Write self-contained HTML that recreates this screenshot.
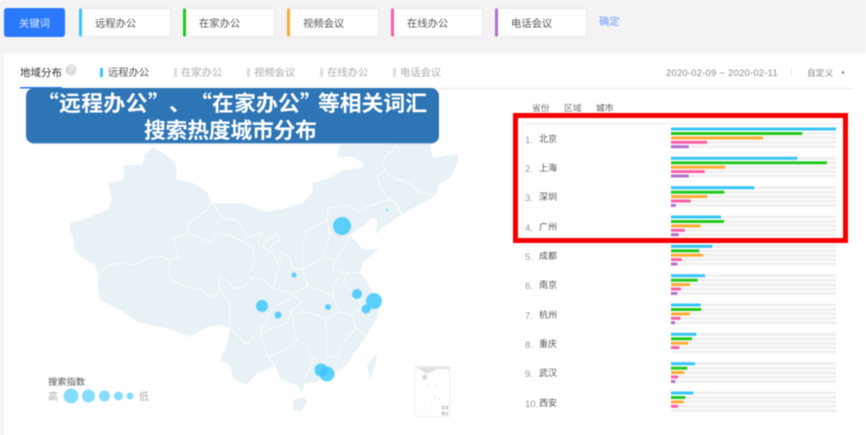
<!DOCTYPE html>
<html lang="zh"><head><meta charset="utf-8"><title>地域分布</title>
<style>
html,body{margin:0;padding:0;background:#fff}
#p{position:relative;width:866px;height:435px;overflow:hidden;background:#fff;font-family:"Liberation Sans","Noto Sans CJK SC",sans-serif;filter:blur(.45px)}
#p div,#p span.a{position:absolute}
.top{left:0;top:0;width:866px;height:53px;background:#f3f3f3}
.gut{left:0;top:53px;width:4px;height:382px;background:#f4f4f4}
.btn{left:4px;top:8px;width:61px;height:29px;background:#2a78fb;border-radius:3px;color:#dfeaff;font-size:10.3px;line-height:33px;text-align:center}
.card{top:8px;width:88px;height:27px;background:#fff;border:1px solid #ebebeb;border-left:3px solid;border-radius:2px;color:#555;font-size:10.3px;line-height:32px;text-indent:13px;white-space:nowrap;box-sizing:content-box}
.t{white-space:nowrap;line-height:14px}
.leg{top:67px;font-size:10.3px;color:#aaa}
.st{top:68px;width:2.5px;height:9px;background:#ddd}
.hd{top:101px;font-size:8.8px;color:#777}
.n{left:525px;font-size:9.5px;color:#999;margin-top:2px}
.c{left:539px;font-size:9px;color:#555}
.banner{left:26px;top:88px;width:413px;height:56px;background:#2e75b6;border-radius:8px;border-bottom:1px solid #a9c8e4;box-sizing:border-box}
.bt{left:0;width:413px;color:#fff;font-weight:700;font-size:21.8px;line-height:26px;white-space:nowrap;font-family:"Noto Sans CJK SC","Liberation Sans",sans-serif}
.red{left:513px;top:113px;width:335px;height:130px;border:5px solid #f50000;box-sizing:border-box}
svg{position:absolute;left:0;top:0}
</style></head><body><div id="p">
<div class="top"></div><div class="gut"></div>
<div class="btn">关键词</div>
<div class="card" style="left:79px;border-left-color:#36c5fb">远程办公</div>
<div class="card" style="left:183px;border-left-color:#22c91e">在家办公</div>
<div class="card" style="left:287px;border-left-color:#ffaa33">视频会议</div>
<div class="card" style="left:391px;border-left-color:#fb5fa5">在线办公</div>
<div class="card" style="left:495px;border-left-color:#b56fcc">电话会议</div>
<div class="t" style="left:599px;top:16px;font-size:10.3px;color:#6f9ff5">确定</div>

<svg width="866" height="435" viewBox="0 0 866 435">
<defs><g id="tr" fill="#f0f0f0"><rect x="671" y="127.5" width="165" height="3"/><rect x="671" y="132" width="165" height="3"/><rect x="671" y="136.4" width="165" height="3"/><rect x="671" y="140.8" width="165" height="3"/><rect x="671" y="145.2" width="165" height="3"/></g></defs>
<!-- map -->
<path fill="#e8f1f5" d="M153 147L163 153L175 162L177 172L176 180L193 183L207 192L212 203L240 203L267 212L287 208L303 203L313 192L312 183L330 178L343 170L363 168L363 163L353 157L337 157L340 145L430 144L433 158L458 154L458 162L450 178L438 185L437 195L422 203L403 214L383 227L375 235L378 220L372 218L360 228L350 235L357 243L363 250L380 248L363 262L360 272L370 287L375 296L380 305L377 318L367 335L353 355L345 367L333 373L317 382L304 384L302 393L298 386L280 378L275 365L257 373L247 385L233 378L230 365L220 360L227 345L230 328L220 325L207 327L190 337L167 328L140 323L117 308L100 300L98 288L98 273L95 265L82 258L75 250L73 237L70 232L70 223L87 218L107 210L112 200L110 190L108 183L123 180L125 165L142 165L145 155Z"/>
<path fill="#e8f1f5" d="M377 353L367 365L370 380L375 366ZM305 397L293 400L293 410L300 412L307 402Z"/>
<g fill="none" stroke="#fff" stroke-width=".8" stroke-linejoin="round">
<path d="M98 277L108 265L123 263L135 265L148 258L160 256L170 260L178 258L177 250L173 238L187 233L190 222L207 210L212 203"/>
<path d="M170 260L169 277L180 285L202 290L210 297L218 293L220 277L227 280L233 288L243 288L252 277"/>
<path d="M187 233L210 242L218 233L230 235L252 247L255 260L248 275"/>
<path d="M212 203L223 218L237 220L248 237L262 232L258 243L270 253L263 243L277 233L280 240L270 247L277 263L282 252L290 258L292 268L303 270L303 240L308 230L327 220L328 208L350 205L357 212L367 207L387 200L395 200L402 218"/>
<path d="M327 220L330 237L323 257L335 260L347 243L350 235M335 260L332 270L343 273L360 272M303 270L323 257"/>
<path d="M398 145L382 160L385 170L377 177L382 190L388 198L398 207L402 215M385 172L393 178L410 183L420 193L437 195"/>
<path d="M250 277L263 280L273 288L290 293L302 302L292 310L293 323L297 340L308 345L310 357L315 357"/>
<path d="M273 288L278 270L282 258M303 270L308 287L300 290L307 285L325 292L333 297L340 313M292 293L300 290"/>
<path d="M297 313L308 312L325 318L340 312L352 315L363 308"/>
<path d="M338 277L333 287L333 297M347 273L343 283L357 298L363 308"/>
<path d="M352 315L355 327L367 335M325 318L327 337L327 357L340 357L338 348L357 327"/>
<path d="M292 310L287 323L273 328L260 335L265 347L268 357L285 350L297 340M268 357L275 365"/>
<path d="M220 288L230 305L230 328L247 345L255 335L263 327L260 335M263 327L273 308L290 298M267 355L275 365M303 382L315 357M340 357L345 367"/>
</g>
<g fill="#36c5fb" fill-opacity=".8">
<circle cx="342" cy="226" r="9"/><circle cx="294" cy="275" r="2.5"/><circle cx="387" cy="210" r="1"/>
<circle cx="357" cy="294" r="5"/><circle cx="374" cy="301" r="8"/><circle cx="366" cy="309" r="4.5"/><circle cx="328" cy="307" r="3"/><circle cx="262" cy="306" r="6"/><circle cx="278" cy="315" r="3.5"/><circle cx="321" cy="370" r="6.5"/><circle cx="327" cy="374" r="7.5"/>
</g>
<g fill="#36c5fb" fill-opacity=".6"><circle cx="71" cy="396" r="7.5"/><circle cx="88.5" cy="396" r="6.5"/><circle cx="104.5" cy="396" r="5.5"/><circle cx="118.5" cy="396" r="4.5"/><circle cx="130" cy="396" r="3.5"/></g>
<!-- inset -->
<rect x="415" y="366.5" width="35" height="50" fill="#fff" stroke="#f1f1f1"/>
<path fill="#e2e2e2" d="M415.500 367H450V369L437 369L430 373L424 373L420 369Z"/><path fill="#d8d8d8" d="M422 376L427 374L427 379L423 380Z"/>
<g fill="#ddd"><rect x="428" y="384" width="2" height="1"/><rect x="434" y="384" width="2" height="1"/><rect x="434" y="396" width="1" height="2"/><rect x="439" y="398" width="1" height="2"/><rect x="431" y="405" width="1" height="1"/><rect x="425" y="405" width="1" height="1"/><rect x="430" y="409" width="1" height="1"/></g>
<text x="441" y="409" font-size="3.800" fill="#999" font-family="Liberation Sans,Noto Sans CJK SC,sans-serif">南海</text>
<text x="441" y="415" font-size="3.800" fill="#999" font-family="Liberation Sans,Noto Sans CJK SC,sans-serif">诸岛</text>
<!-- dividers -->
<rect x="20" y="88" width="833" height="1" fill="#eaeaea"/>
<rect x="20" y="87" width="42" height="1.500" fill="#2a78fb"/>
<rect x="524" y="123" width="329" height="1" fill="#eaeaea"/>
<rect x="791" y="67" width="1" height="9" fill="#e5e5e5"/>
<circle cx="71" cy="70" r="5.500" fill="#ddd"/>
<circle cx="843" cy="72.500" r="1.200" fill="#777"/>
<!-- tracks -->
<use href="#tr"/><use href="#tr" y="29.33"/><use href="#tr" y="58.67"/><use href="#tr" y="88"/><use href="#tr" y="117.33"/><use href="#tr" y="146.67"/><use href="#tr" y="176"/><use href="#tr" y="205.33"/><use href="#tr" y="234.67"/><use href="#tr" y="264"/>
<!-- bars -->
<g fill="#36c5fb"><rect x="671" y="127.5" width="165" height="3"/><rect x="671" y="156.8" width="126.300" height="3"/><rect x="671" y="186.2" width="83.300" height="3"/><rect x="671" y="215.5" width="50" height="3"/><rect x="671" y="244.8" width="41.300" height="3"/><rect x="671" y="274.2" width="34" height="3"/><rect x="671" y="303.5" width="29.700" height="3"/><rect x="671" y="332.8" width="25.300" height="3"/><rect x="671" y="362.2" width="24" height="3"/><rect x="671" y="391.5" width="22.300" height="3"/></g>
<g fill="#22c91e"><rect x="671" y="132" width="131.300" height="3"/><rect x="671" y="161.3" width="156" height="3"/><rect x="671" y="190.700" width="53.300" height="3"/><rect x="671" y="220" width="53" height="3"/><rect x="671" y="249.3" width="28.300" height="3"/><rect x="671" y="278.700" width="26.700" height="3"/><rect x="671" y="308" width="30.300" height="3"/><rect x="671" y="337.3" width="21" height="3"/><rect x="671" y="366.7" width="16.300" height="3"/><rect x="671" y="396" width="14.300" height="3"/></g>
<g fill="#ffaa33"><rect x="671" y="136.4" width="92" height="3"/><rect x="671" y="165.700" width="54.300" height="3"/><rect x="671" y="195.100" width="36" height="3"/><rect x="671" y="224.4" width="29.700" height="3"/><rect x="671" y="253.700" width="32" height="3"/><rect x="671" y="283.100" width="19" height="3"/><rect x="671" y="312.4" width="18.700" height="3"/><rect x="671" y="341.700" width="17.300" height="3"/><rect x="671" y="371.100" width="13.300" height="3"/><rect x="671" y="400.4" width="12.700" height="3"/></g>
<g fill="#fb5fa5"><rect x="671" y="140.8" width="36" height="3"/><rect x="671" y="170.100" width="33.700" height="3"/><rect x="671" y="199.5" width="19.700" height="3"/><rect x="671" y="228.8" width="13.700" height="3"/><rect x="671" y="258.100" width="10.700" height="3"/><rect x="671" y="287.5" width="10" height="3"/><rect x="671" y="316.8" width="9.300" height="3"/><rect x="671" y="346.100" width="8.300" height="3"/><rect x="671" y="375.5" width="7" height="3"/><rect x="671" y="404.8" width="7" height="3"/></g>
<g fill="#b56fcc"><rect x="671" y="145.2" width="17.700" height="3"/><rect x="671" y="174.5" width="17.700" height="3"/><rect x="671" y="203.9" width="4.700" height="3"/><rect x="671" y="233.2" width="7.700" height="3"/><rect x="671" y="262.5" width="6.300" height="3"/><rect x="671" y="291.9" width="6.300" height="3"/><rect x="671" y="321.2" width="4" height="3"/><rect x="671" y="380" width="4.300" height="3"/></g>
</svg>

<div class="t" style="left:20px;top:66px;font-size:10.5px;color:#333">地域分布</div>
<div class="t" style="left:69px;top:63px;font-size:8px;color:#fff">?</div>
<div class="st" style="left:100px;background:#36c5fb"></div><div class="t leg" style="left:108px;color:#555">远程办公</div>
<div class="st" style="left:174px"></div><div class="t leg" style="left:181px">在家办公</div>
<div class="st" style="left:247px"></div><div class="t leg" style="left:254px">视频会议</div>
<div class="st" style="left:320px"></div><div class="t leg" style="left:327px">在线办公</div>
<div class="st" style="left:393px"></div><div class="t leg" style="left:400px">电话会议</div>
<div class="t" style="left:666px;top:66px;font-size:9.300px;color:#888;letter-spacing:.3px">2020-02-09 ~ 2020-02-11</div>
<div class="t" style="left:807px;top:66px;font-size:8.800px;color:#888">自定义</div>
<div class="t hd" style="left:532px">省份</div><div class="t hd" style="left:564px">区域</div><div class="t hd" style="left:596px;color:#555">城市</div>

<div class="t n" style="top:132px">1.</div><div class="t c" style="top:132px">北京</div>
<div class="t n" style="top:161px">2.</div><div class="t c" style="top:161px">上海</div>
<div class="t n" style="top:190px">3.</div><div class="t c" style="top:190px">深圳</div>
<div class="t n" style="top:220px">4.</div><div class="t c" style="top:220px">广州</div>
<div class="t n" style="top:249px">5.</div><div class="t c" style="top:249px">成都</div>
<div class="t n" style="top:278px">6.</div><div class="t c" style="top:278px">南京</div>
<div class="t n" style="top:308px">7.</div><div class="t c" style="top:308px">杭州</div>
<div class="t n" style="top:337px">8.</div><div class="t c" style="top:337px">重庆</div>
<div class="t n" style="top:366px">9.</div><div class="t c" style="top:366px">武汉</div>
<div class="t n" style="top:396px">10.</div><div class="t c" style="top:396px">西安</div>

<div class="red"></div>
<div class="banner">
<div class="bt" style="top:2px">
<span class="a" style="left:11px">“</span><span class="a" style="left:33px;letter-spacing:.4px">远程办公</span><span class="a" style="left:122px">”</span><span class="a" style="left:143px">、</span><span class="a" style="left:164px">“</span><span class="a" style="left:186px;letter-spacing:.2px">在家办公</span><span class="a" style="left:274px">”</span><span class="a" style="left:292px">等相关词汇</span>
</div>
<div class="bt" style="top:29px;left:118px;width:180px;letter-spacing:-.2px">搜索热度城市分布</div>
</div>
<div class="t" style="left:48px;top:375px;font-size:9.300px;color:#555">搜索指数</div>
<div class="t" style="left:48px;top:391px;font-size:10px;color:#aaa">高</div>
<div class="t" style="left:139px;top:391px;font-size:10px;color:#aaa">低</div>
</div></body></html>
